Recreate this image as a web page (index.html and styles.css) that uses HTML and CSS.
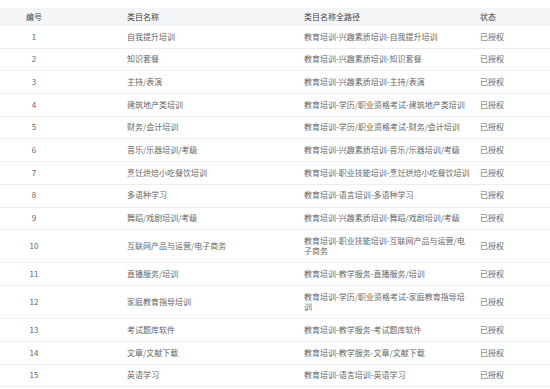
FILE: index.html
```html
<!DOCTYPE html>
<html lang="zh-CN">
<head>
<meta charset="utf-8">
<link rel="stylesheet" href="styles.css">
</head>
<body>
<div class="wrap">
<table class="grid">
<colgroup>
<col class="c-no"><col class="c-name"><col class="c-path"><col class="c-state">
</colgroup>
<thead>
<tr><th class="no">编号</th><th class="name">类目名称</th><th class="path">类目名称全路径</th><th class="state">状态</th></tr>
</thead>
<tbody>
<tr><td class="no">1</td><td class="name">自我提升培训</td><td class="path">教育培训-兴趣素质培训-自我提升培训</td><td class="state">已授权</td></tr>
<tr><td class="no">2</td><td class="name">知识套餐</td><td class="path">教育培训-兴趣素质培训-知识套餐</td><td class="state">已授权</td></tr>
<tr><td class="no">3</td><td class="name">主持/表演</td><td class="path">教育培训-兴趣素质培训-主持/表演</td><td class="state">已授权</td></tr>
<tr><td class="no">4</td><td class="name">建筑地产类培训</td><td class="path">教育培训-学历/职业资格考试-建筑地产类培训</td><td class="state">已授权</td></tr>
<tr><td class="no">5</td><td class="name">财务/会计培训</td><td class="path">教育培训-学历/职业资格考试-财务/会计培训</td><td class="state">已授权</td></tr>
<tr><td class="no">6</td><td class="name">音乐/乐器培训/考级</td><td class="path">教育培训-兴趣素质培训-音乐/乐器培训/考级</td><td class="state">已授权</td></tr>
<tr><td class="no">7</td><td class="name">烹饪烘焙小吃餐饮培训</td><td class="path">教育培训-职业技能培训-烹饪烘焙小吃餐饮培训</td><td class="state">已授权</td></tr>
<tr><td class="no">8</td><td class="name">多语种学习</td><td class="path">教育培训-语言培训-多语种学习</td><td class="state">已授权</td></tr>
<tr><td class="no">9</td><td class="name">舞蹈/戏剧培训/考级</td><td class="path">教育培训-兴趣素质培训-舞蹈/戏剧培训/考级</td><td class="state">已授权</td></tr>
<tr><td class="no">10</td><td class="name">互联网产品与运营/电子商务</td><td class="path">教育培训-职业技能培训-互联网产品与运营/电子商务</td><td class="state">已授权</td></tr>
<tr><td class="no">11</td><td class="name">直播服务/培训</td><td class="path">教育培训-教学服务-直播服务/培训</td><td class="state">已授权</td></tr>
<tr><td class="no">12</td><td class="name">家庭教育指导培训</td><td class="path">教育培训-学历/职业资格考试-家庭教育指导培训</td><td class="state">已授权</td></tr>
<tr><td class="no">13</td><td class="name">考试题库软件</td><td class="path">教育培训-教学服务-考试题库软件</td><td class="state">已授权</td></tr>
<tr><td class="no">14</td><td class="name">文章/文献下载</td><td class="path">教育培训-教学服务-文章/文献下载</td><td class="state">已授权</td></tr>
<tr><td class="no">15</td><td class="name">英语学习</td><td class="path">教育培训-语言培训-英语学习</td><td class="state">已授权</td></tr>
</tbody>
</table>
</div>
</body>
</html>
```
FILE: styles.css
```css
html, body {
  margin: 0;
  padding: 0;
  background: #ffffff;
}
body {
  font-family: "Noto Sans CJK SC", "Noto Sans", sans-serif;
  font-size: 8px;
  color: #666666;
}
.wrap {
  padding-top: 8px;
}
.grid {
  width: 550px;
  border-collapse: collapse;
  table-layout: fixed;
}
.c-no { width: 119px; }
.c-name { width: 177px; }
.c-path { width: 175px; }
.c-state { width: 79px; }
.grid th {
  background: #f4f5f6;
  color: #444444;
  font-weight: normal;
  height: 18px;
  padding: 0;
  line-height: 10.5px;
  text-align: left;
}
.grid td {
  padding: 5.6px 0;
  line-height: 10.5px;
  border-bottom: 1px solid #ededed;
  text-align: left;
  vertical-align: middle;
}
.grid .no {
  text-align: center;
  padding-right: 51px;
}
.grid .name {
  padding-left: 8px;
}
.grid .path {
  padding-left: 8px;
  padding-right: 0.5px;
}
.grid .state {
  padding-left: 9px;
}
```
